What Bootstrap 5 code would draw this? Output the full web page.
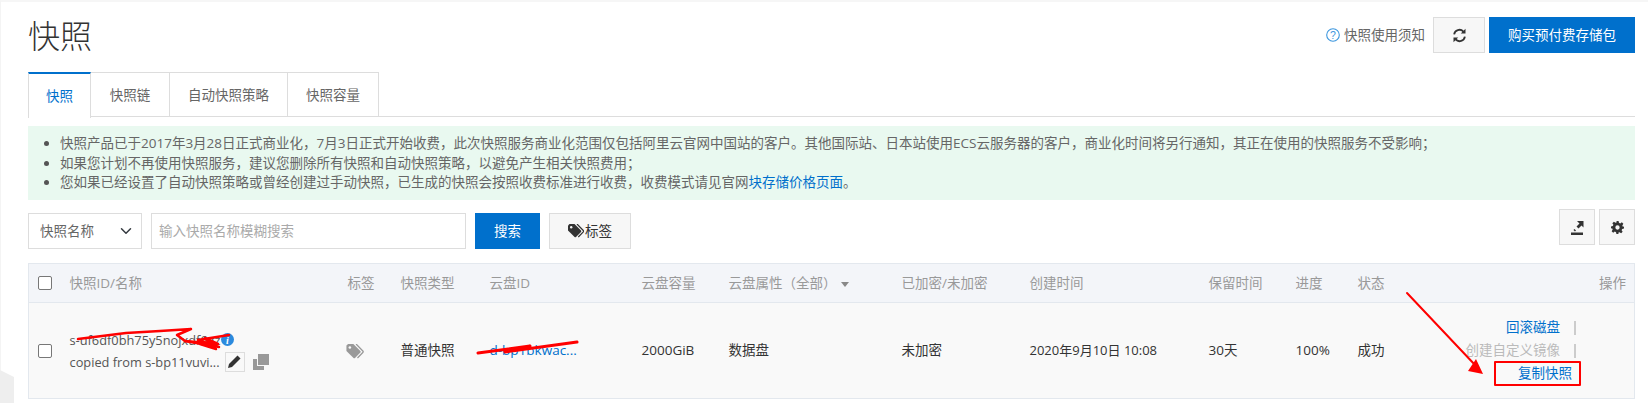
<!DOCTYPE html>
<html lang="zh-CN">
<head>
  <meta charset="UTF-8">
  <meta name="viewport" content="width=device-width, initial-scale=1">
  <title>快照</title>
  <link href="https://cdn.jsdelivr.net/npm/bootstrap@5.3.0/dist/css/bootstrap.min.css" rel="stylesheet">
  <style>
    html, body { height: 403px; overflow: hidden; }
    body { position: relative; background: #fff; color: #333; font: 13.5px/1.5 "Open Sans", "Noto Sans CJK SC", sans-serif; }
    .snap-page { padding: 17px 13px 0 27px; border-top: 2px solid #f6f6f6; border-left: 1px solid #f4f4f4; }
    .snap-head { height: 55px; margin-top: -2px; }
    .snap-title { font-size: 32px; line-height: 36px; font-weight: 300; color: #333; margin: 1px 0 0; }
    .help-link { color: #666; font-size: 13.5px; margin-right: 8px; }
    .btn-flat { border-radius: 0; border: 1px solid #ddd; background: #f7f7f7; color: #333; font-size: 13.5px; padding: 0; height: 36px; display: inline-flex; align-items: center; justify-content: center; }
    .btn-blue { border-radius: 0; border: 0; background: #0070cc; color: #fff; font-size: 13.5px; padding: 0; height: 36px; display: inline-flex; align-items: center; justify-content: center; }
    .btn-blue:hover { background: #0063b5; color: #fff; }
    .refresh-btn { width: 52px; margin-right: 4px; }
    .buy-btn { width: 146px; }

    .snap-tabs { border-bottom: 1px solid #ddd; height: 45px; }
    .snap-tabs .nav-link { height: 45px; border: 1px solid #ddd; border-left: 0; border-bottom: 0; border-radius: 0; color: #666; font-size: 13.5px; padding: 0; display: flex; align-items: center; justify-content: center; }
    .snap-tabs .nav-link.active { color: #0070cc; border-top: 2px solid #0070cc; border-left: 1px solid #ddd; background: #fff; height: 46px; margin-bottom: -1px; }
    .tab-a { width: 63px; } .tab-b { width: 79px; } .tab-c { width: 118px; } .tab-d { width: 91px; }

    .snap-notice { background: #e9f9f0; border: 0; border-radius: 0; margin: 9px 0 0; padding: 8px 0 7px 32px; height: 74px; color: #666; font-size: 13.5px; line-height: 19.5px; }
    .snap-notice ul { margin: 0; padding: 0; }
    .snap-notice a { color: #0070cc; text-decoration: none; }
    .snap-notice li::marker { color: #555; }

    .search-row { height: 63px; padding-top: 9px; }
    .snap-select { width: 114px; height: 36px; border-radius: 0; border-color: #ddd; font-size: 13.5px; color: #666; padding: 0 0 0 11px; margin-top: 4px; background-position: right 7px center; }
    .snap-input { width: 315px; height: 36px; border-radius: 0; border-color: #ddd; font-size: 13.5px; padding: 0 7px; margin: 4px 9px 0 9px; }
    .snap-input::placeholder { color: #aaa; }
    .search-btn { width: 65px; margin-top: 4px; margin-right: 9px; }
    .tag-btn { width: 82px; margin-top: 4px; gap: 1px; }
    .square-btn { width: 36px; margin-left: 4px; }

    .snap-table { table-layout: fixed; width: 1607px; margin: 0; border: 1px solid #e3e8ee; border-bottom: 0; font-size: 13.5px; }
    .snap-table th { height: 39px; background: #f3f5f9; color: #999; font-weight: 400; padding: 0 0 0 10px; border-bottom: 1px solid #e3e8ee; vertical-align: middle; box-shadow: none; white-space: nowrap; }
    .snap-table td { height: 96px; background: #f9f9f9; color: #333; padding: 0 0 0 10px; border-bottom: 1px solid #e3e8ee; vertical-align: middle; box-shadow: none; }
    .snap-table .check-cell { padding-left: 9px; }
    .snap-table .form-check-input { width: 14px; height: 14px; margin: 0; border: 1px solid #777; border-radius: 2px; display: block; }
    .snap-table a { color: #0070cc; text-decoration: none; }
    .snap-table .tag-cell { padding-left: 8px; }
    .snap-table .date-cell { font-size: 13px; }
    .id-line { line-height: 22px; color: #555; white-space: nowrap; font-size: 12.8px; }
    .pen-box { display: inline-flex; width: 20px; height: 20px; border: 1px solid #ddd; align-items: center; justify-content: center; margin-left: 5px; }
    .actions-cell { text-align: right; }
    .snap-table td.actions-cell { padding: 0 58px 0 0; }
    .snap-table th.actions-head { text-align: right; padding: 0 8px 0 0; }
    .action-line { height: 23px; line-height: 23px; display: flex; justify-content: flex-end; align-items: center; white-space: nowrap; }
    .action-line i { display: block; width: 2px; height: 14px; background: #ccc; margin-left: 14px; }
    .action-off { color: #bbb; }
    .action-last { margin-right: 4px; }
    .mark-overlay { position: absolute; left: 0; top: 0; pointer-events: none; }
  </style>
</head>
<body>
  <div class="snap-page">
    <div class="snap-head d-flex justify-content-between align-items-start">
      <h1 class="snap-title">快照</h1>
      <div class="d-flex align-items-center">
        <span class="help-link d-flex align-items-center gap-1">
          <svg width="14" height="14" viewBox="0 0 14 14"><circle cx="7" cy="7" r="6.3" fill="none" stroke="#3d97de" stroke-width="1.1"/><text x="7" y="10.5" text-anchor="middle" font-size="10.5" fill="#3d97de" font-family="Liberation Sans">?</text></svg>
          快照使用须知
        </span>
        <button class="btn-flat refresh-btn" type="button">
          <svg width="15" height="15" viewBox="0 0 14 14"><path d="M2 6a5 5 0 0 1 8.600-2.700M12 8a5 5 0 0 1-8.600 2.700" fill="none" stroke="#333" stroke-width="1.700"/><path d="M12.600 0.800v4.400H8.200zM1.400 13.200V8.800h4.400z" fill="#333"/></svg>
        </button>
        <button class="btn-blue buy-btn" type="button">购买预付费存储包</button>
      </div>
    </div>

    <ul class="nav snap-tabs">
      <li class="nav-item"><a class="nav-link active tab-a" href="#">快照</a></li>
      <li class="nav-item"><a class="nav-link tab-b" href="#">快照链</a></li>
      <li class="nav-item"><a class="nav-link tab-c" href="#">自动快照策略</a></li>
      <li class="nav-item"><a class="nav-link tab-d" href="#">快照容量</a></li>
    </ul>

    <div class="alert snap-notice">
      <ul>
        <li>快照产品已于2017年3月28日正式商业化，7月3日正式开始收费，此次快照服务商业化范围仅包括阿里云官网中国站的客户。其他国际站、日本站使用ECS云服务器的客户，商业化时间将另行通知，其正在使用的快照服务不受影响；</li>
        <li>如果您计划不再使用快照服务，建议您删除所有快照和自动快照策略，以避免产生相关快照费用；</li>
        <li>您如果已经设置了自动快照策略或曾经创建过手动快照，已生成的快照会按照收费标准进行收费，收费模式请见官网<a href="#">块存储价格页面</a>。</li>
      </ul>
    </div>

    <div class="search-row d-flex align-items-start">
      <select class="form-select snap-select"><option>快照名称</option></select>
      <input class="form-control snap-input" type="text" placeholder="输入快照名称模糊搜索">
      <button class="btn-blue search-btn" type="button">搜索</button>
      <button class="btn-flat tag-btn" type="button">
        <svg width="16" height="14" viewBox="0 0 16 14"><path d="M0 1.500 1.500 0h5L13 6.500a1 1 0 0 1 0 1.400L8 13a1 1 0 0 1-1.400 0L0 6.500z" fill="#333"/><path d="M9 0l6.300 6.500a1 1 0 0 1 0 1.400l-5 5.100" fill="none" stroke="#333" stroke-width="1.200"/><circle cx="3.200" cy="3.200" r="1.200" fill="#f7f7f7"/></svg>
        标签
      </button>
      <div class="ms-auto d-flex">
        <button class="btn-flat square-btn" type="button">
          <svg width="14" height="15" viewBox="0 0 14 15"><path d="M1 12.500h12V15H1z" fill="#333"/><path d="M7 1h6.500v6.500l-2-2-3 3-2-2 3-3z" fill="#333"/><path d="M4 9.500l1.500 1.500" stroke="#333" stroke-width="1.500"/></svg>
        </button>
        <button class="btn-flat square-btn" type="button">
          <svg width="13" height="13" viewBox="0 0 24 24"><path d="M10 0h4l.7 3.400 2.300 1 3-1.900 2.800 2.800-1.900 3 1 2.300L24 10v4l-3.400.7-1 2.300 1.900 3-2.800 2.800-3-1.900-2.300 1L14 24h-4l-.7-3.400-2.300-1-3 1.900-2.800-2.800 1.900-3-1-2.300L0 14v-4l3.400-.7 1-2.300-1.900-3 2.800-2.800 3 1.900 2.300-1zM12 8a4 4 0 1 0 0 8 4 4 0 0 0 0-8z" fill="#333" fill-rule="evenodd"/></svg>
        </button>
      </div>
    </div>

    <table class="table snap-table">
      <colgroup>
        <col style="width:31px"><col style="width:278px"><col style="width:53px"><col style="width:89px"><col style="width:152px"><col style="width:87px"><col style="width:173px"><col style="width:128px"><col style="width:179px"><col style="width:87px"><col style="width:62px"><col style="width:70px"><col>
      </colgroup>
      <thead>
        <tr>
          <th class="check-cell"><input class="form-check-input" type="checkbox"></th>
          <th>快照ID/名称</th><th>标签</th><th>快照类型</th><th>云盘ID</th><th>云盘容量</th>
          <th>云盘属性（全部）<svg class="ms-1" width="8" height="5" viewBox="0 0 8 5"><path d="M0 0h8L4 5z" fill="#888"/></svg></th>
          <th>已加密/未加密</th><th>创建时间</th><th>保留时间</th><th>进度</th><th>状态</th>
          <th class="actions-head">操作</th>
        </tr>
      </thead>
      <tbody>
        <tr>
          <td class="check-cell"><input class="form-check-input" type="checkbox"></td>
          <td>
            <div class="id-line d-flex align-items-center">s-uf6df0bh75y5nojxdf6gz
              <svg class="ms-0" width="13" height="13" viewBox="0 0 13 13"><circle cx="6.500" cy="6.500" r="6.500" fill="#2b8ade"/><text x="6.500" y="10.500" text-anchor="middle" font-size="10" font-style="italic" font-weight="700" fill="#fff" font-family="Liberation Serif">i</text></svg>
            </div>
            <div class="id-line d-flex align-items-center">copied from s-bp11vuvi...
              <span class="pen-box">
                <svg width="13" height="13" viewBox="0 0 13 13"><path d="M9.500.5l3 3-8.500 8.500L0 13l1-4z" fill="#333"/></svg>
              </span>
              <svg class="ms-2" width="16" height="16" viewBox="0 0 16 16"><path d="M5 0h11v11H5z" fill="#999"/><path d="M0 5h4v7h7v4H0z" fill="#999"/></svg>
            </div>
          </td>
          <td class="tag-cell">
            <svg width="18" height="15" viewBox="0 0 16 14"><path d="M0 1.500 1.500 0h5L13 6.500a1 1 0 0 1 0 1.400L8 13a1 1 0 0 1-1.400 0L0 6.500z" fill="#999"/><path d="M9 0l6.300 6.500a1 1 0 0 1 0 1.400l-5 5.100" fill="none" stroke="#999" stroke-width="1.200"/><circle cx="3.200" cy="3.200" r="1.200" fill="#f9f9f9"/></svg>
          </td>
          <td>普通快照</td>
          <td><a href="#">d-bp1bkwac...</a></td>
          <td>2000GiB</td>
          <td>数据盘</td>
          <td>未加密</td>
          <td class="date-cell">2020年9月10日 10:08</td>
          <td>30天</td>
          <td>100%</td>
          <td>成功</td>
          <td class="actions-cell">
            <div class="action-line"><a href="#">回滚磁盘</a><i></i></div>
            <div class="action-line"><span class="action-off">创建自定义镜像</span><i></i></div>
            <div class="action-line"><a class="action-last" href="#">复制快照</a></div>
          </td>
        </tr>
      </tbody>
    </table>
  </div>

  <svg class="mark-overlay" width="1648" height="403" viewBox="0 0 1648 403">
    <path d="M0 370 14 377V403H0z" fill="#eee"/>
    <g fill="none" stroke="#f00" stroke-linecap="round" stroke-linejoin="round">
      <path d="M78 339 126 333 160 331 191 329 177 335 185 341 219 347 198 340 229 335" stroke-width="2.500"/>
      <path d="M185 341 218 344 205 338 216 349 200 344" stroke-width="2.500"/>
      <path d="M478 353 530 346 505 352 577 342" stroke-width="3"/>
      <rect x="1495" y="362" width="85" height="23" stroke-width="2"/>
      <path d="M1407 293 1476 366" stroke-width="2"/>
    </g>
    <path d="M1468 371 1483 374 1476 359z" fill="#f00"/>
  </svg>
  <script src="https://cdn.jsdelivr.net/npm/bootstrap@5.3.0/dist/js/bootstrap.bundle.min.js"></script>
</body>
</html>
